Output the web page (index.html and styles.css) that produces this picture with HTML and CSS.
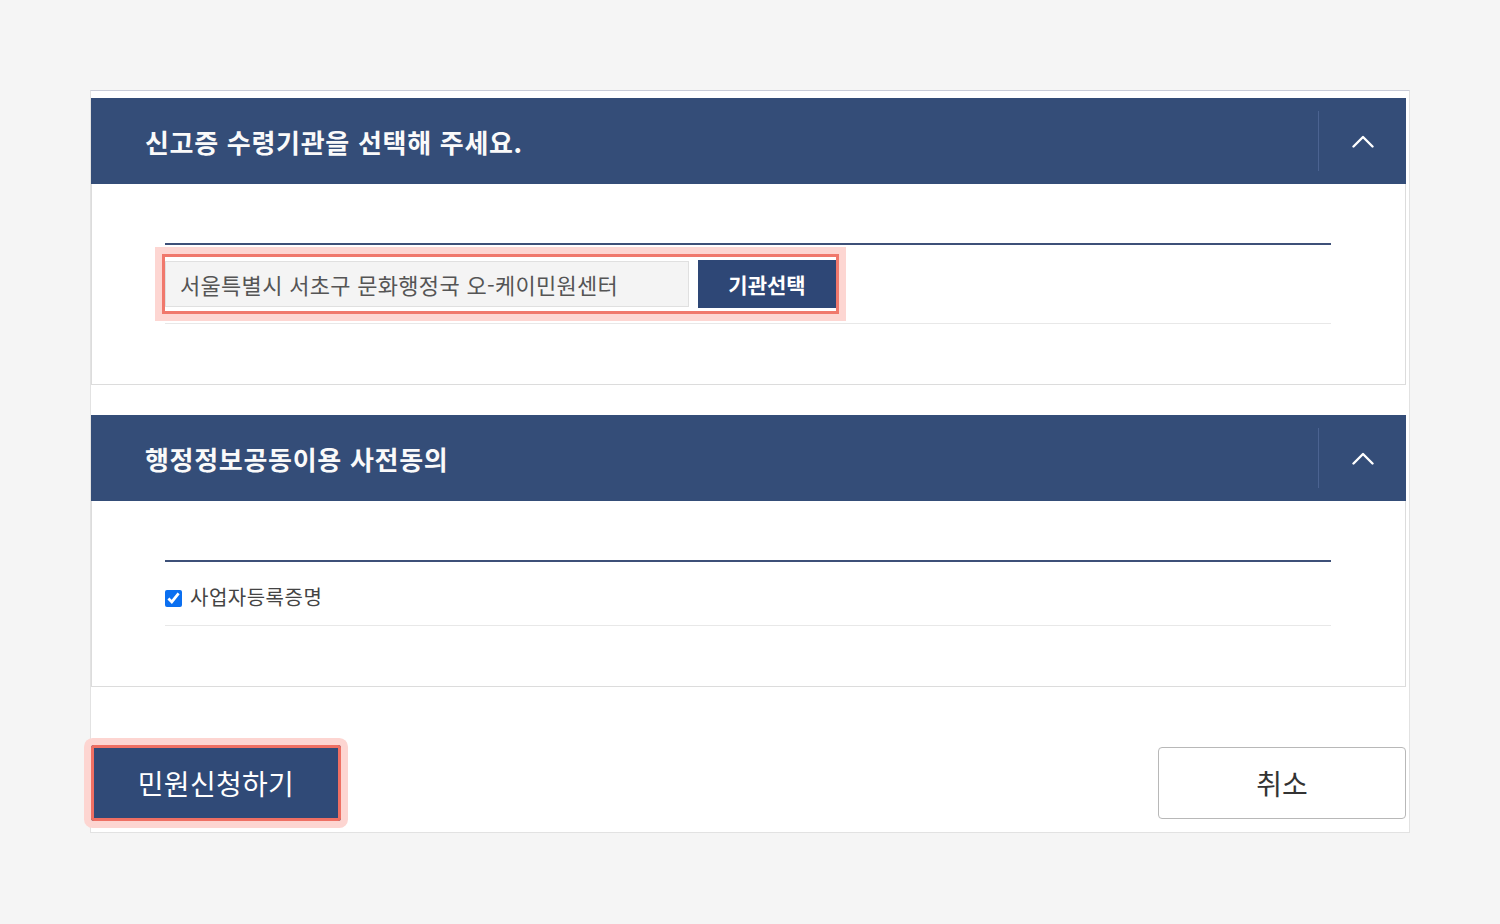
FILE: index.html
```html
<!DOCTYPE html>
<html lang="ko">
<head>
<meta charset="utf-8">
<title>민원신청</title>
<link rel="stylesheet" href="styles.css">
</head>
<body>
<div class="wrap">
  <section class="panel">
    <header class="panel-head">
      <h2 class="panel-title">신고증 수령기관을 선택해 주세요.</h2>
      <span class="divider"></span>
      <span class="toggle">
        <svg width="22" height="13" viewBox="0 0 22 13"><path d="M1.5 11.5 L11 2 L20.5 11.5" fill="none" stroke="#fff" stroke-width="2.4" stroke-linecap="round" stroke-linejoin="round"/></svg>
      </span>
    </header>
    <div class="panel-body">
      <div class="table">
        <div class="row row-org">
          <div class="hl">
            <input class="field" type="text" value="서울특별시 서초구 문화행정국 오-케이민원센터" readonly>
            <button class="btn-select" type="button">기관선택</button>
          </div>
        </div>
      </div>
    </div>
  </section>

  <section class="panel panel-second">
    <header class="panel-head">
      <h2 class="panel-title">행정정보공동이용 사전동의</h2>
      <span class="divider"></span>
      <span class="toggle">
        <svg width="22" height="13" viewBox="0 0 22 13"><path d="M1.5 11.5 L11 2 L20.5 11.5" fill="none" stroke="#fff" stroke-width="2.4" stroke-linecap="round" stroke-linejoin="round"/></svg>
      </span>
    </header>
    <div class="panel-body">
      <div class="table">
        <div class="row row-check">
          <label class="check"><input type="checkbox" checked><span>사업자등록증명</span></label>
        </div>
      </div>
    </div>
  </section>

  <div class="actions">
    <button class="btn-primary" type="button">민원신청하기</button>
    <button class="btn-cancel" type="button">취소</button>
  </div>
</div>
</body>
</html>
```

FILE: styles.css
```css
* { box-sizing: border-box; }

html, body {
  margin: 0;
  padding: 0;
  background: #f5f5f5;
  font-family: "Noto Sans CJK KR", "Noto Sans", sans-serif;
}

.wrap {
  margin: 90px 0 0 90px;
  width: 1320px;
  background: #fff;
  border-top: 1px solid #c9ccd8;
  border-left: 1px solid #e2e2e2;
  border-right: 1px solid #e2e2e2;
  border-bottom: 1px solid #e2e2e2;
  padding: 7px 3px 11px 0;
}

.panel-second { margin-top: 30px; }

.panel-head {
  display: flex;
  align-items: center;
  height: 86px;
  background: #344d78;
}

.panel-title {
  flex: 1;
  margin: 0;
  padding: 2px 0 0 54px;
  color: #fafafa;
  font-size: 26px;
  font-weight: 700;
  letter-spacing: 0.7px;
  line-height: 1;
}

.divider {
  width: 1px;
  height: 60px;
  background: #4b6391;
}

.toggle {
  width: 87px;
  display: flex;
  justify-content: center;
  align-items: center;
}

.toggle svg { display: block; }

.panel-body {
  border: 1px solid #dcdcdc;
  border-top: none;
  padding: 59px 74px 60px 73px;
}

.table { border-top: 2px solid #3d5078; }

.row {
  display: flex;
  align-items: center;
  border-bottom: 1px solid #e8e8e8;
}

.row-org { height: 79px; }
.row-check { height: 64px; padding-top: 6px; }

.hl {
  display: flex;
  align-items: center;
  gap: 9px;
  padding: 3px 0;
  outline: 3px solid #f0786c;
  box-shadow: 0 0 0 10px #fdd6d2;
}

.field {
  width: 524px;
  height: 46px;
  margin: 0;
  padding: 0 14px;
  border: 1px solid #e0e0e0;
  background: #f4f4f4;
  color: #555;
  font-family: inherit;
  font-size: 22px;
  letter-spacing: 0.3px;
  outline: none;
}

.btn-select {
  width: 138px;
  height: 48px;
  border: none;
  margin: 0;
  background: #2e4776;
  color: #fff;
  font-family: inherit;
  font-size: 21px;
  font-weight: 700;
}

.check {
  display: flex;
  align-items: center;
  gap: 8px;
  color: #444;
  font-size: 20px;
  letter-spacing: 0.5px;
}

.check input {
  width: 17px;
  height: 17px;
  margin: 3px 0 0;
  accent-color: #0b6ff0;
}

.actions {
  display: flex;
  justify-content: space-between;
  align-items: center;
  margin-top: 58px;
}

.btn-primary {
  width: 250px;
  height: 76px;
  margin: 0;
  border: none;
  border-radius: 3px;
  background: #304a77;
  color: #fff;
  font-family: inherit;
  font-size: 28px;
  letter-spacing: 0.3px;
  outline: 3px solid #ef6f63;
  outline-offset: -3px;
  box-shadow: 0 0 0 7px #fdd5d1;
}

.btn-cancel {
  width: 248px;
  height: 72px;
  margin: 0;
  border: 1.5px solid #b8b8b8;
  border-radius: 4px;
  background: #fff;
  color: #333;
  font-family: inherit;
  font-size: 28px;
}
```
